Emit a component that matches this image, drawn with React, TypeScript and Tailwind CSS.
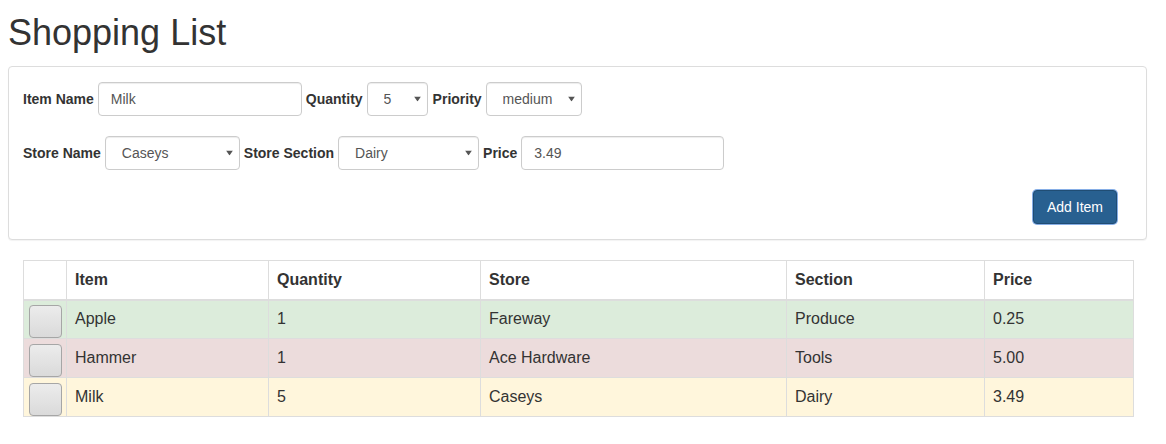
import { useState } from 'react';

interface Item {
  id: number;
  name: string;
  quantity: number;
  store: string;
  section: string;
  price: string;
  rowClass: string;
}

const items: Item[] = [
  { id: 1, name: 'Apple', quantity: 1, store: 'Fareway', section: 'Produce', price: '0.25', rowClass: 'bg-[#dcecdb]' },
  { id: 2, name: 'Hammer', quantity: 1, store: 'Ace Hardware', section: 'Tools', price: '5.00', rowClass: 'bg-[#ecdcdc]' },
  { id: 3, name: 'Milk', quantity: 5, store: 'Caseys', section: 'Dairy', price: '3.49', rowClass: 'bg-[#fff6dc]' },
];

const Caret = () => (
  <svg
    className="pointer-events-none absolute right-[7px] top-1/2 -translate-y-1/2"
    width="7"
    height="5"
    viewBox="0 0 7 5"
  >
    <path d="M0 0h7L3.5 5z" fill="#555" />
  </svg>
);

const Select = ({ value, options, width }: { value: string; options: string[]; width: string }) => (
  <div className={`relative h-[34px] ${width}`}>
    <select
      defaultValue={value}
      className="h-full w-full appearance-none rounded-[4px] border border-[#ccc] bg-white pl-[16px] pr-6 text-[14px] text-[#555] shadow-[inset_0_1px_1px_rgba(0,0,0,0.075)] outline-none"
    >
      {options.map((o) => (
        <option key={o} value={o}>
          {o}
        </option>
      ))}
    </select>
    <Caret />
  </div>
);

const App = () => {
  const [name, setName] = useState('Milk');
  const [price, setPrice] = useState('3.49');

  return (
    <div className="min-h-screen bg-white px-2 pb-6 font-['Liberation_Sans',Arial,sans-serif] text-[14px] text-[#333]">
      {/* Header */}
      <h1 className="mb-[13px] mt-[13px] text-[36px] font-normal leading-[40px]">Shopping List</h1>

      {/* Form panel */}
      <div className="w-[1139px] rounded-[4px] border border-[#ddd] bg-white px-[14px] py-[15px] shadow-[0_1px_1px_rgba(0,0,0,0.05)]">
        <div className="flex h-[34px] items-center gap-[4px]">
          <label className="font-bold">Item Name</label>
          <input
            value={name}
            onChange={(e) => setName(e.target.value)}
            className="h-[34px] w-[204px] rounded-[4px] border border-[#ccc] px-3 text-[14px] text-[#555] shadow-[inset_0_1px_1px_rgba(0,0,0,0.075)] outline-none"
          />
          <label className="font-bold">Quantity</label>
          <Select value="5" options={['1', '2', '3', '4', '5']} width="w-[61px]" />
          <label className="ml-px font-bold">Priority</label>
          <Select value="medium" options={['low', 'medium', 'high']} width="w-[96px]" />
        </div>

        <div className="mt-5 flex h-[34px] items-center gap-[4px]">
          <label className="font-bold">Store Name</label>
          <Select value="Caseys" options={['Fareway', 'Ace Hardware', 'Caseys']} width="w-[135px]" />
          <label className="font-bold">Store Section</label>
          <Select value="Dairy" options={['Produce', 'Tools', 'Dairy']} width="w-[141px]" />
          <label className="font-bold">Price</label>
          <input
            value={price}
            onChange={(e) => setPrice(e.target.value)}
            className="h-[34px] w-[203px] rounded-[4px] border border-[#ccc] px-3 text-[14px] text-[#555] shadow-[inset_0_1px_1px_rgba(0,0,0,0.075)] outline-none"
          />
        </div>

        <div className="mt-[20px] flex justify-end pr-[15px]">
          <button
            type="button"
            className="h-[34px] w-[84px] rounded-[4px] border border-[#204d74] bg-[#286090] text-[14px] text-white shadow-[0_0_0_1px_#86aee6]"
          >
            Add Item
          </button>
        </div>
      </div>

      {/* Items table */}
      <div className="ml-[15px] mt-5">
        <table className="w-[1110px] table-fixed border-collapse text-[16px]">
          <colgroup>
            <col className="w-[43px]" />
            <col className="w-[202px]" />
            <col className="w-[212px]" />
            <col className="w-[306px]" />
            <col className="w-[198px]" />
            <col className="w-[149px]" />
          </colgroup>
          <thead>
            <tr>
              <th className="h-[39px] border border-b-2 border-[#ddd] px-2"></th>
              <th className="h-[39px] border border-b-2 border-[#ddd] px-2 text-left font-bold">Item</th>
              <th className="h-[39px] border border-b-2 border-[#ddd] px-2 text-left font-bold">Quantity</th>
              <th className="h-[39px] border border-b-2 border-[#ddd] px-2 text-left font-bold">Store</th>
              <th className="h-[39px] border border-b-2 border-[#ddd] px-2 text-left font-bold">Section</th>
              <th className="h-[39px] border border-b-2 border-[#ddd] px-2 text-left font-bold">Price</th>
            </tr>
          </thead>
          <tbody>
            {items.map((item) => (
              <tr key={item.id} className={item.rowClass}>
                <td className="h-[39px] border border-[#ddd] p-0 align-middle">
                  <button
                    type="button"
                    className="mx-auto mt-[4px] block h-[33px] w-[33px] rounded-[4px] border border-[#a6a6a6] bg-linear-to-b from-[#ececec] to-[#dadada]"
                  />
                </td>
                <td className="h-[39px] border border-[#ddd] px-2">{item.name}</td>
                <td className="h-[39px] border border-[#ddd] px-2">{item.quantity}</td>
                <td className="h-[39px] border border-[#ddd] px-2">{item.store}</td>
                <td className="h-[39px] border border-[#ddd] px-2">{item.section}</td>
                <td className="h-[39px] border border-[#ddd] px-2">{item.price}</td>
              </tr>
            ))}
          </tbody>
        </table>
      </div>
    </div>
  );
};

export default App;
